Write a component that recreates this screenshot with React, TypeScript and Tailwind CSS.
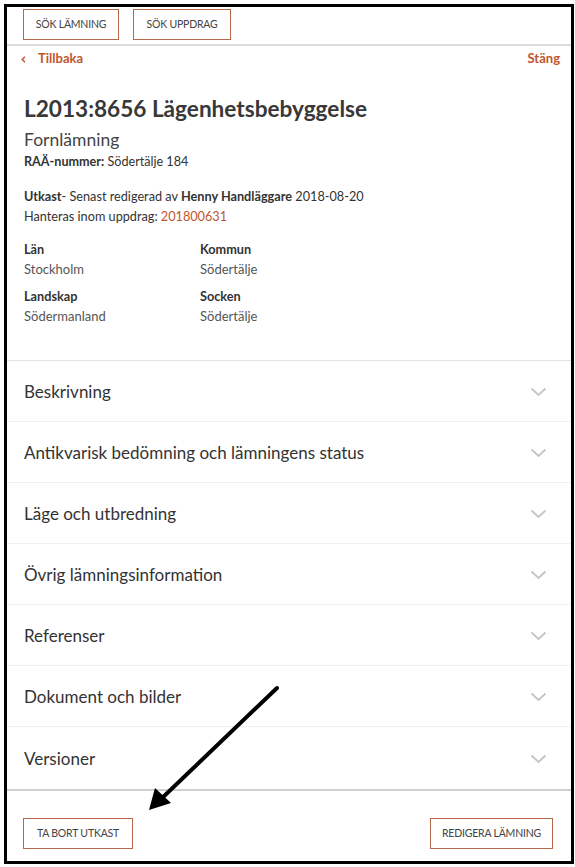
import React from "react";

const rows = [
  "Beskrivning",
  "Antikvarisk bedömning och lämningens status",
  "Läge och utbredning",
  "Övrig lämningsinformation",
  "Referenser",
  "Dokument och bilder",
  "Versioner",
];

function Chevron() {
  return (
    <svg width="17" height="10" viewBox="0 0 17 10" fill="none">
      <path d="M1.5 1.5 L8.5 8 L15.5 1.5" stroke="#c4c4c4" strokeWidth="1.8" />
    </svg>
  );
}

export default function App() {
  return (
    <div className="relative w-[575px] h-[867px] bg-white pl-[4px] pt-[4px]" style={{ fontFamily: "Lato, 'Noto Sans', sans-serif" }}>
      <div className="w-[570px] h-[860px] border-[3px] border-black flex flex-col bg-white">
        {/* header */}
        <div className="h-[39px] border-b-2 border-[#dcdcdc] flex items-start gap-[14px] pl-[16px] pt-[2px]">
          <button className="h-[31px] w-[96px] border border-[#b8694a] text-[10.5px] text-[#444] tracking-[-0.2px]">SÖK LÄMNING</button>
          <button className="h-[31px] w-[98px] border border-[#b8694a] text-[10.5px] text-[#444] tracking-[-0.2px]">SÖK UPPDRAG</button>
        </div>
        {/* nav */}
        <div className="h-[26px] flex items-center justify-between pl-[14px] pr-[11px] text-[13px] font-bold text-[#c0562f]">
          <div className="flex items-center">
            <span className="w-[17px] flex items-center">
              <svg width="5" height="7" viewBox="0 0 5 7" fill="none">
                <path d="M4 0.8 L1.2 3.5 L4 6.2" stroke="#c0562f" strokeWidth="1.4" />
              </svg>
            </span>
            <span>Tillbaka</span>
          </div>
          <span>Stäng</span>
        </div>
        {/* details */}
        <div className="pl-[17px] pb-[34px] border-b border-[#e2e2e2] text-[#333]">
          <h1 className="mt-[23px] text-[22.6px] leading-[28px] font-bold text-[#383838]">L2013:8656 Lägenhetsbebyggelse</h1>
          <div className="mt-[5px] text-[17.5px] leading-[24px] text-[#444]">Fornlämning</div>
          <div className="mt-[1px] text-[12.6px] leading-[18px]"><span className="font-bold">RAÄ-nummer:</span> Södertälje 184</div>
          <div className="mt-[15px] text-[12.7px] leading-[20px]"><span className="font-bold">Utkast</span>- Senast redigerad av <span className="font-bold">Henny Handläggare</span> 2018-08-20</div>
          <div className="text-[12.7px] leading-[20px]">Hanteras inom uppdrag: <span className="text-[#c0562f]">201800631</span></div>
          <div className="mt-[13px] grid grid-cols-[176px_176px] gap-y-[7px] text-[13px] leading-[20px]">
            <div><div className="font-bold text-[12.7px]">Län</div><div className="text-[#555]">Stockholm</div></div>
            <div><div className="font-bold text-[12.7px]">Kommun</div><div className="text-[#555]">Södertälje</div></div>
            <div><div className="font-bold text-[12.7px]">Landskap</div><div className="text-[#555]">Södermanland</div></div>
            <div><div className="font-bold text-[12.7px]">Socken</div><div className="text-[#555]">Södertälje</div></div>
          </div>
        </div>
        {/* accordion */}
        <div className="flex flex-col">
          {rows.map((r, i) => (
            <div key={r} className={`${i < rows.length - 1 ? "h-[61px] border-b border-[#f0f0f0]" : "h-[62px]"} flex items-center justify-between pl-[17px] pr-[24px] pt-[2px]`}>
              <span className="text-[17px] text-[#333]">{r}</span>
              <Chevron />
            </div>
          ))}
        </div>
        {/* footer */}
        <div className="flex-1 border-t-2 border-[#cfcfcf] flex items-start justify-between pl-[16px] pr-[18px] pt-[27px]">
          <button className="h-[31px] w-[110px] border border-[#b8694a] text-[10.5px] text-[#444] tracking-[-0.2px]">TA BORT UTKAST</button>
          <button className="h-[31px] w-[123px] border border-[#b8694a] text-[10.5px] text-[#444] tracking-[-0.2px]">REDIGERA LÄMNING</button>
        </div>
      </div>
      {/* annotation arrow */}
      <svg className="absolute left-0 top-0 pointer-events-none" width="575" height="867" viewBox="0 0 575 867">
        <line x1="277" y1="688" x2="160" y2="800" stroke="#000" strokeWidth="4" strokeLinecap="round" />
        <polygon points="149,810 155,788 171,803" fill="#000" />
      </svg>
    </div>
  );
}
